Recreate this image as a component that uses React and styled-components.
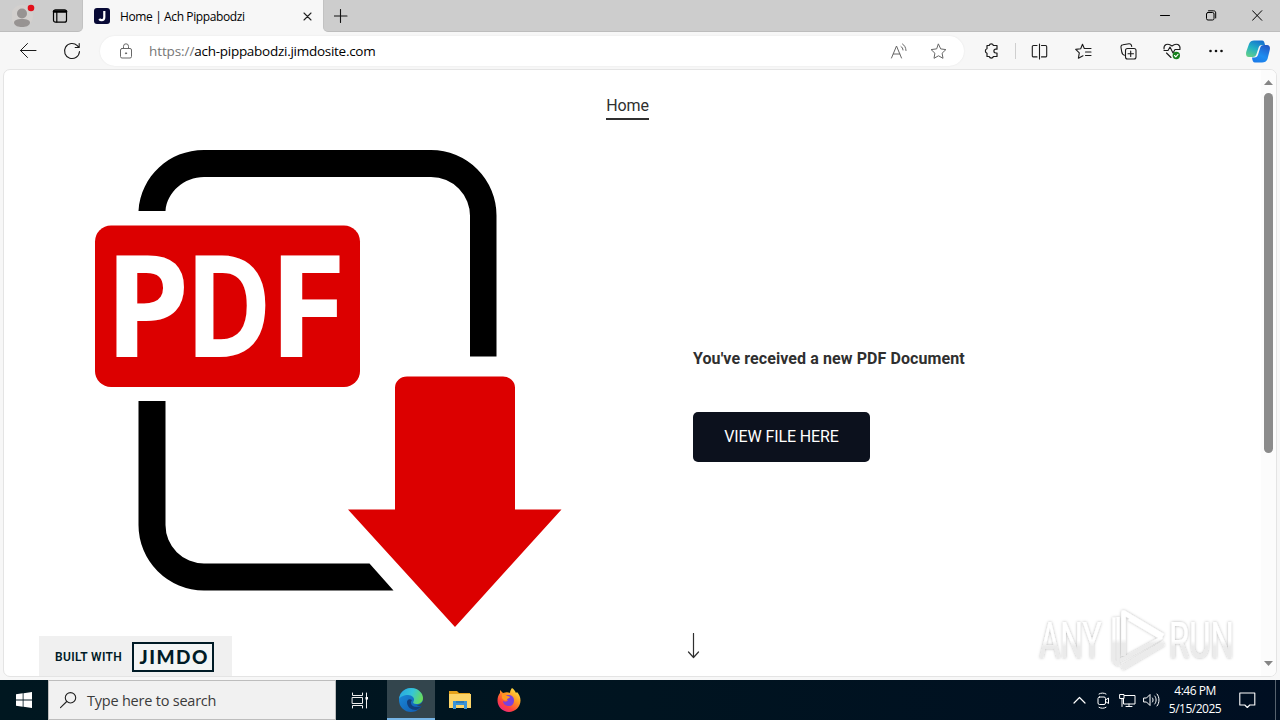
import styled, { createGlobalStyle } from 'styled-components';

const GlobalStyle = createGlobalStyle`
    * {
        box-sizing: border-box;
    }

    body {
        margin: 0;
        overflow: hidden;
    }
`

const Screen = styled.div`
    display: flex;
    flex-direction: column;
    width: 1280px;
    height: 720px;
    overflow: hidden;
    background: #f7f7f7;
    font-family: 'Open Sans', 'Noto Sans', sans-serif;
    color: #000;

    svg {
        display: block;
        flex: none;
    }
`

/* ---------- title bar ---------- */

const TitleBar = styled.div`
    display: flex;
    height: 32px;
    flex: none;
    background: #f7f7f7;
`

const ProfileArea = styled.div`
    display: flex;
    align-items: center;
    gap: 16px;
    width: 83px;
    padding-left: 12px;
    background: #cdcdcd;
    border-bottom: 1px solid #bdbdbd;
    border-right: 1px solid #c2c2c2;
    border-radius: 0 0 5px 0;
`

const Tab = styled.div`
    display: flex;
    align-items: center;
    width: 240px;
    padding: 0 10px 0 11px;
    font-size: 12px;
`

const TabTitle = styled.span`
    flex: 1;
    margin-left: 10px;
    letter-spacing: -0.38px;
    white-space: nowrap;
`

const TitleRest = styled.div`
    display: flex;
    flex: 1;
    align-items: center;
    justify-content: space-between;
    padding-left: 10px;
    background: #cdcdcd;
    border-bottom: 1px solid #bdbdbd;
    border-left: 1px solid #c2c2c2;
    border-radius: 0 0 0 5px;
`

const WindowButtons = styled.div`
    display: flex;
`

const Slot = styled.div`
    display: flex;
    align-items: center;
    justify-content: center;
    flex: none;
    width: ${props => props.$w || 44}px;
`

/* ---------- toolbar ---------- */

const Toolbar = styled.div`
    display: flex;
    align-items: center;
    height: 37px;
    flex: none;
    padding: 1px 0 0 6px;
`

const AddressBar = styled.div`
    display: flex;
    align-items: center;
    width: 864px;
    height: 30px;
    margin-left: 6px;
    margin-right: 5px;
    padding-left: 20px;
    background: white;
    border-radius: 15px;
    box-shadow: 0 0 2px rgba(0, 0, 0, 0.08);
    font-size: 13.5px;
`

const Url = styled.span`
    flex: 1;
    margin-left: 17px;
    letter-spacing: -0.27px;
    white-space: nowrap;
`

const Scheme = styled.span`
    color: #767676;
    letter-spacing: -0.1px;
`

const Divider = styled.div`
    width: 1px;
    height: 16px;
    margin: 0 1px 0 2px;
    background: #cfcfcf;
`

/* ---------- page ---------- */

const Frame = styled.div`
    position: relative;
    display: flex;
    height: 608px;
    flex: none;
    margin: 0 3px 3px;
    background: white;
    border: 1px solid #e4e4e4;
    border-radius: 7px;
    overflow: hidden;
    font-family: Roboto, sans-serif;
    color: #2f2f2f;
`

const Page = styled.main`
    display: flex;
    flex-direction: column;
    flex: 1;
`

const Nav = styled.nav`
    display: flex;
    justify-content: center;
    height: 60px;
    padding: 26px 10px 0 0;
`

const NavLink = styled.a`
    height: 24px;
    border-bottom: 2px solid #2f2f2f;
    font-size: 16px;
    line-height: 20px;
    letter-spacing: -0.1px;
`

const Hero = styled.section`
    display: flex;
    flex: 1;
    padding-left: 76px;
`

const Message = styled.div`
    display: flex;
    flex-direction: column;
    align-items: flex-start;
    margin-left: 93px;
    padding-top: 217px;
`

const Heading = styled.h1`
    margin: 0;
    font-size: 16px;
    font-weight: 700;
    line-height: 24px;
    letter-spacing: 0.09px;
    white-space: nowrap;
`

const ViewButton = styled.button`
    width: 177px;
    height: 50px;
    margin-top: 41px;
    padding: 0 0 2px;
    border: none;
    border-radius: 5px;
    background: #0c111d;
    color: white;
    font-family: Roboto, sans-serif;
    font-size: 16px;
    letter-spacing: -0.1px;
`

const ScrollHint = styled.div`
    margin: 171px 0 0 -6px;
`

const ScrollTrack = styled.div`
    display: flex;
    flex-direction: column;
    align-items: center;
    width: 15px;
    padding-top: 10px;
    background: #fcfcfc;
`

const ScrollThumb = styled.div`
    width: 9px;
    height: 360px;
    margin: 8px 0 208px;
    border-radius: 5px;
    background: #8b8b8b;
`

const BuiltWith = styled.div`
    position: absolute;
    left: 35px;
    bottom: 0;
    display: flex;
    align-items: center;
    gap: 10px;
    width: 193px;
    height: 40px;
    padding: 1px 0 0 16px;
    background: #f0f0f0;
    color: #001b26;
    font-size: 12px;
    white-space: nowrap;
`

const BuiltLabel = styled.span`
    width: 67px;
    font-weight: 600;
    letter-spacing: 0.33px;
`

const Watermark = styled.div`
    position: absolute;
    right: 28px;
    bottom: 0;
`

/* ---------- taskbar ---------- */

const Taskbar = styled.div`
    display: flex;
    align-items: stretch;
    height: 40px;
    flex: none;
    background: linear-gradient(90deg, #001720, #001420 50%, #000f22);
    color: white;
`

const SearchBox = styled.div`
    display: flex;
    align-items: center;
    gap: 10px;
    width: 288px;
    padding-left: 11px;
    background: #f1f1f1;
    border: 1px solid #bdbdbd;
    color: #3b3b3b;
    font-size: 14.5px;
    letter-spacing: -0.22px;
`

const TaskButton = styled(Slot)`
    background: ${props => (props.$active ? '#33454d' : 'none')};
    border-bottom: 2px solid ${props => (props.$active ? '#76b5e6' : 'transparent')};
    padding-top: 2px;
`

const Spacer = styled.div`
    flex: 1;
`

const Clock = styled.div`
    width: 64px;
    padding-top: 2px;
    font-size: 12px;
    line-height: 18px;
    letter-spacing: -0.5px;
    text-align: center;
    white-space: nowrap;
`

const ShowDesktop = styled.div`
    width: 5px;
    border-left: 1px solid #56626e;
`

/* ---------- icons ---------- */

function Icon({ w = 16, h = w, color = '#1b1b1b', sw = 1, children }) {
    return (
        <svg width={w} height={h} viewBox={`0 0 ${w} ${h}`} fill="none" stroke={color}
            strokeWidth={sw} strokeLinecap="round" strokeLinejoin="round">
            {children}
        </svg>
    );
}

function ProfileIcon() {
    return (
        <svg width="24" height="24" viewBox="0 0 24 24">
            <circle cx="10" cy="12" r="11" fill="#d3d0ce" />
            <circle cx="10" cy="9.500" r="5" fill="#979392" />
            <path d="M2 19c0-3 3-4 8-4s8 1 8 4c-1 3-4 4-8 4s-7-1-8-4z" fill="#979392" />
            <circle cx="19" cy="4" r="3.300" fill="#e3101b" />
        </svg>
    );
}

function CopilotIcon() {
    return (
        <svg width="24" height="23" viewBox="0 0 24 23">
            <defs>
                <linearGradient id="copA" x1="0.700" y1="0" x2="0.200" y2="1">
                    <stop offset="0" stopColor="#1672cf" />
                    <stop offset="0.500" stopColor="#22b0c4" />
                    <stop offset="1" stopColor="#62cf8a" />
                </linearGradient>
                <linearGradient id="copB" x1="0.800" y1="0" x2="0.300" y2="1">
                    <stop offset="0" stopColor="#2358c5" />
                    <stop offset="0.600" stopColor="#1d8df0" />
                    <stop offset="1" stopColor="#1b7be9" />
                </linearGradient>
            </defs>
            <path d="M8 .5h8c2 0 2.500 2 3 4.500h-3c-2 0-3 1-3.500 3l-2 6c-.6 2-1.500 3-4 3H3c-3 0-3.500-3-2.500-6l2.500-7C3.800 1.500 6 .5 8 .5z" fill="url(#copA)" />
            <path d="M16 22.500H9c-2 0-2.500-1.500-3-5h2.500c2 0 3-1 3.600-3l2-6.500c.6-2 1.400-3 3.900-3H21c3 0 3.500 3 2.500 6l-2 8c-.8 2.500-3 3.500-5.500 3.500z" fill="url(#copB)" />
        </svg>
    );
}

function PdfPicture() {
    return (
        <svg width="520" height="510" viewBox="80 130 520 510">
            <path d="M138.500 211C141 176 169 150 204 150H431A65.500 65.500 0 0 1 496.500 215.500V356.500H470V217A39 39 0 0 0 431 177H204C184 177 167 192 165.500 211Z" fill="#000" />
            <path d="M138.500 401H165.500V525A38.500 38.500 0 0 0 204 563.500H369.500L393.500 590.500H204A65.500 65.500 0 0 1 138.500 525Z" fill="#000" />
            <rect x="95" y="225.500" width="265" height="161.500" rx="16" fill="#dc0000" />
            <path d="M407 376.500H503A12 11 0 0 1 515 387.500V509.500H561.500L455 627L348 509.500H395V387.500A12 11 0 0 1 407 376.500Z" fill="#dc0000" />
            <g fill="#fff" fontFamily="Open Sans" fontWeight="700" fontSize="141">
                <text transform="translate(104.300 356.500) scale(0.970 1)">P</text>
                <text transform="translate(185 356.500) scale(0.835 1)">D</text>
                <text transform="translate(268 356.500) scale(1.015 1)">F</text>
            </g>
        </svg>
    );
}

function JimdoLogo() {
    return (
        <svg width="82" height="30" viewBox="0 0 82 30">
            <rect x="1" y="1" width="80" height="28" fill="#f3f5f5" stroke="#001b26" strokeWidth="2" />
            <text x="7.500" y="21.700" fontFamily="Lato" fontWeight="900" fontSize="19" fill="#001b26"
                textLength="68">JIMDO</text>
        </svg>
    );
}

function AnyRun() {
    return (
        <svg width="214" height="72" viewBox="1033 604 214 72">
            <defs>
                <linearGradient id="wm" gradientUnits="userSpaceOnUse" x1="0" y1="610" x2="0" y2="670">
                    <stop offset="0.480" stopColor="#fff" />
                    <stop offset="0.560" stopColor="#ebebeb" />
                </linearGradient>
                <linearGradient id="wmText" x1="0" y1="0" x2="0" y2="1">
                    <stop offset="0.500" stopColor="#fff" />
                    <stop offset="0.600" stopColor="#ebebeb" />
                </linearGradient>
                <filter id="glow" x="-5%" y="-10%" width="110%" height="120%">
                    <feDropShadow dx="0" dy="0" stdDeviation="1.800" floodColor="#000" floodOpacity="0.300" />
                </filter>
            </defs>
            <g filter="url(#glow)">
                <g fill="url(#wmText)" fontFamily="Roboto" fontWeight="400" fontSize="50">
                    <text transform="translate(1038.500 658) scale(0.635 1)">ANY</text>
                    <text transform="translate(1168 658) scale(0.657 1)">RUN</text>
                </g>
                <g fill="none" stroke="url(#wm)" strokeWidth="4.500" strokeLinejoin="round">
                    <path d="M1122.500 656V612.500L1162 636" />
                    <path d="M1113 617.500V661L1117 664.500V617" strokeWidth="3" />
                    <path d="M1121 668L1162.500 643.500" />
                    <path d="M1119 660.500L1160 638L1128 619" strokeWidth="3" />
                </g>
            </g>
        </svg>
    );
}

function EdgeLogo() {
    return (
        <svg width="24" height="24" viewBox="0 0 24 24">
            <defs>
                <linearGradient id="edgeTop" x1="0" y1="0.300" x2="1" y2="0.600">
                    <stop offset="0" stopColor="#28a8e0" />
                    <stop offset="0.500" stopColor="#35c5d8" />
                    <stop offset="1" stopColor="#6adc55" />
                </linearGradient>
                <linearGradient id="edgeLow" x1="0" y1="0" x2="1" y2="1">
                    <stop offset="0" stopColor="#1b8fdd" />
                    <stop offset="1" stopColor="#1057ae" />
                </linearGradient>
            </defs>
            <circle cx="12" cy="12" r="12" fill="url(#edgeLow)" />
            <path d="M24 11c0 4-3 6-6.500 6 2 1.500 4 1.200 5.800.5L26 14z" fill="#33454d" />
            <path d="M0 11C1 4 6 0 12 0c7 0 12 5 12 10 0 4-3 6-6.500 6-3 0-4-1-3-2.500C16.500 10 13 7 9 7 5 7 1 9 0 11z" fill="url(#edgeTop)" />
            <path d="M8 14c0 5 4 8 9 8 2-.4 4-2 5.500-4-5 2-10 1-10.500-3-.2-2 .6-2 1-3-3-2-5 0-5 2z" fill="#123f7c" />
        </svg>
    );
}

function ExplorerLogo() {
    return (
        <svg width="22" height="20" viewBox="0 0 22 20">
            <path d="M0 1h8l2 2h11v4H0z" fill="#e5a21b" />
            <path d="M0 4h22v14H0z" fill="#fcd468" />
            <path d="M4 11h14v8h-3v-4H7v4H4z" fill="#3a93d6" />
            <path d="M7 11h8v2H7z" fill="#2b7ab9" />
        </svg>
    );
}

function FirefoxLogo() {
    return (
        <svg width="24" height="24" viewBox="0 0 24 24">
            <defs>
                <linearGradient id="fox" x1="0.900" y1="0" x2="0.200" y2="1">
                    <stop offset="0" stopColor="#fff04a" />
                    <stop offset="0.400" stopColor="#ff9a22" />
                    <stop offset="0.750" stopColor="#ff4040" />
                    <stop offset="1" stopColor="#e7258a" />
                </linearGradient>
            </defs>
            <path d="M15 0c2 1 3 3 4 5l1-1c2 2 3.500 5 3.500 8.500C23.500 19 18 24 12 24S.5 19 .5 12.500C.5 9 1.500 7 3 5V2l3 3c3-1 5-1 7 0 0-2 1-4 2-5z" fill="url(#fox)" />
            <path d="M11 7c4 0 6 2 6 5.500S15 18 12 18s-6-2-6-5c2 1 4 1 5-1-2 0-3-1-4-2 1-2 2-3 4-3z" fill="#7a41dd" />
            <path d="M5 6c2 0 4 1 5 2 1 0 2 0 3 1-1 2-3 1-3 3-2 1-4 0-5-2z" fill="#ff9a22" />
        </svg>
    );
}

function Browser() {
    return (
        <>
            <TitleBar>
                <ProfileArea>
                    <ProfileIcon />
                    <Icon w={16} h={14} color="#000" sw={1.2}>
                        <rect x="1.500" y=".8" width="13" height="12.400" rx="2" />
                        <path d="M2 2.500h12" strokeWidth="2.500" />
                        <path d="M4.800 3v10" />
                    </Icon>
                </ProfileArea>
                <Tab>
                    <svg width="16" height="16" viewBox="0 0 16 16">
                        <rect width="16" height="16" rx="3" fill="#080a36" />
                        <path d="M10.300 3v6.200c0 2-1 3-2.600 3-1.100 0-1.900-.4-2.500-1.200" fill="none" stroke="#fff" strokeWidth="2.200" />
                    </svg>
                    <TabTitle>Home | Ach Pippabodzi</TabTitle>
                    <Icon w={11} color="#222" sw={1.1}><path d="M2 2l7 7M9 2l-7 7" /></Icon>
                </Tab>
                <TitleRest>
                    <Icon w={14} color="#111" sw={1.1}><path d="M6.500 .5v13M0 7h13" /></Icon>
                    <WindowButtons>
                        <Slot $w={46}><Icon w={11} color="#000"><path d="M.5 5.500h9" /></Icon></Slot>
                        <Slot $w={46}>
                            <Icon w={11} color="#000">
                                <rect x=".5" y="2.500" width="7.500" height="7.500" rx="1.500" />
                                <path d="M2.500 .8h5c1.500 0 2.200.8 2.200 2.200v5" />
                            </Icon>
                        </Slot>
                        <Slot $w={46}><Icon w={11} color="#000"><path d="M.5.7l9.300 9.600M9.800.7L.5 10.300" /></Icon></Slot>
                    </WindowButtons>
                </TitleRest>
            </TitleBar>
            <Toolbar>
                <Slot><Icon w={18}><path d="M1.500 8.500h15.500M8.500 1.500L1.500 8.500l7 7" /></Icon></Slot>
                <Slot><Icon w={18} sw={1.1}><path d="M16.500 9.500a7.500 7.500 0 1 1-2.200-5.800L16 5.500M16.200 1.500v4h-4" /></Icon></Slot>
                <AddressBar>
                    <Icon w={12} h={16} color="#686868">
                        <rect x=".5" y="5.500" width="11" height="9.500" rx="1.500" />
                        <path d="M3.500 5.500V3.300a2.500 2.500 0 0 1 5 0v2.200" />
                        <circle cx="6" cy="10.300" r=".6" fill="#686868" />
                    </Icon>
                    <Url><Scheme>https://</Scheme>ach-pippabodzi.jimdosite.com</Url>
                    <Slot $w={40}>
                        <Icon w={17} color="#666">
                            <path d="M1.500 15L6.500 3l5 12M3.300 11h6.500" />
                            <path d="M11 3.500c1.200.8 1.800 1.800 2 3.500M12.500 1c2.200 1.500 3.300 3.500 3.500 6.500" />
                        </Icon>
                    </Slot>
                    <Slot $w={40}>
                        <Icon w={17} color="#666">
                            <path d="M8.500 1.200l2.200 4.700 5.200.7-3.800 3.600.9 5.100-4.500-2.500L4 15.300l.9-5.100L1.100 6.600l5.200-.7z" />
                        </Icon>
                    </Slot>
                    <Slot $w={6} />
                </AddressBar>
                <Slot>
                    <Icon w={16} sw={1.2}>
                        <path d="M4 2.500h2.200a2.200 2.200 0 0 1 4.200 0H14v3.700h-1.200a1.900 1.900 0 0 0 0 3.800H14v3.500h-3.600a2.200 2.200 0 0 1-4.200 0H4V10.200a2.300 2.300 0 0 1 0-4.400z" />
                    </Icon>
                </Slot>
                <Divider />
                <Slot>
                    <Icon w={17} sw={1.1}>
                        <path d="M6 2.500H2.500a1.200 1.200 0 0 0-1.200 1.200v9a1.200 1.200 0 0 0 1.200 1.200H6M10.500 2.500h4a1.200 1.200 0 0 1 1.200 1.200v9a1.200 1.200 0 0 1-1.200 1.200h-4M8.500 1v15" />
                    </Icon>
                </Slot>
                <Slot $w={45}>
                    <Icon w={17} sw={1.1}>
                        <path d="M9.300 5.500L7.500 1.300 5.700 5.800l-5 .6 3.600 3.500-.9 5.300L8 12.800M9.300 5.500h6.700M10.500 9H16M10.500 12.500H16" />
                    </Icon>
                </Slot>
                <Slot>
                    <Icon w={17} sw={1.1}>
                        <path d="M4.500 12.200C2.500 12 2 10.500 1.700 8.700L1 4.500C.8 3 1.500 2 3 1.800l6-1c1.500-.2 2.500.7 2.700 2.700" />
                        <rect x="5.500" y="5.500" width="10.500" height="10.500" rx="2" />
                        <path d="M10.700 8v5.500M8 10.700h5.500" />
                    </Icon>
                </Slot>
                <Slot>
                    <Icon w={18} sw={1.1}>
                        <path d="M1 7C.5 3 4.500.3 9 4c4.500-3.700 8.500-1 8 3M1 8.500h4L7 5l3 6 2-3.500h5M3.500 11L8 15.500" />
                        <circle cx="13.300" cy="13.500" r="3.700" fill="#16801c" stroke="none" />
                        <path d="M11.500 13.500l1.300 1.300 2.200-2.500" stroke="#fff" />
                    </Icon>
                </Slot>
                <Slot>
                    <Icon w={16}>
                        <g fill="#111" stroke="none">
                            <circle cx="2.500" cy="8" r="1.300" />
                            <circle cx="8" cy="8" r="1.300" />
                            <circle cx="13.500" cy="8" r="1.300" />
                        </g>
                    </Icon>
                </Slot>
                <Slot $w={40}><CopilotIcon /></Slot>
            </Toolbar>
        </>
    );
}

function Site() {
    return (
        <Frame>
            <Page>
                <Nav><NavLink>Home</NavLink></Nav>
                <Hero>
                    <PdfPicture />
                    <Message>
                        <Heading>You've received a new PDF Document</Heading>
                        <ViewButton>VIEW FILE HERE</ViewButton>
                        <ScrollHint>
                            <Icon w={13} h={26} color="#2f2f2f" sw={1.2}><path d="M6.500 .5v24M1.500 19l5 5.500 5-5.500" /></Icon>
                        </ScrollHint>
                    </Message>
                </Hero>
            </Page>
            <ScrollTrack>
                <svg width="9" height="5"><path d="M0 5L4.500 0L9 5Z" fill="#858585" /></svg>
                <ScrollThumb />
                <svg width="9" height="5"><path d="M0 0L4.500 5L9 0Z" fill="#858585" /></svg>
            </ScrollTrack>
            <BuiltWith>
                <BuiltLabel>BUILT WITH</BuiltLabel>
                <JimdoLogo />
            </BuiltWith>
            <Watermark><AnyRun /></Watermark>
        </Frame>
    );
}

function WindowsTaskbar() {
    return (
        <Taskbar>
            <Slot $w={48}>
                <svg width="16" height="16" viewBox="0 0 16 16" fill="#fff">
                    <path d="M0 2.300L6.700 1.300V7.600H0zM7.500 1.200L16 0V7.600H7.500zM0 8.400H6.700V14.700L0 13.700zM7.500 8.400H16V16L7.500 14.800z" />
                </svg>
            </Slot>
            <SearchBox>
                <Icon w={17} color="#222" sw={1.1}><circle cx="10.500" cy="5.800" r="5.200" /><path d="M6.700 9.500L.5 15.700" /></Icon>
                Type here to search
            </SearchBox>
            <Slot $w={48}>
                <Icon w={18} h={17} color="#eee">
                    <path d="M1.500 1v2.500h10V1M1.500 16v-2.500h10V16M15.500 1v15" />
                    <rect x="1.500" y="5.500" width="10" height="6" />
                    <rect x="14.500" y="5" width="2.500" height="2.500" fill="#fff" stroke="none" />
                </Icon>
            </Slot>
            <Slot $w={3} />
            <TaskButton $w={48} $active><EdgeLogo /></TaskButton>
            <TaskButton $w={49}><ExplorerLogo /></TaskButton>
            <TaskButton $w={49}><FirefoxLogo /></TaskButton>
            <Spacer />
            <Slot $w={24}><Icon w={13} h={8} color="#fff" sw={1.2}><path d="M1 7l5.500-5.500L12 7" /></Icon></Slot>
            <Slot $w={24}>
                <Icon w={14} h={17} color="#fff">
                    <rect x="2" y="5" width="7.500" height="7.500" rx="1.500" />
                    <path d="M9.500 8l3-2v5.500l-3-2M3 2c2-1.300 5-1.300 7 0M3 15.300c2 1.300 5 1.300 7 0" />
                </Icon>
            </Slot>
            <Slot $w={24}>
                <Icon w={17} h={15} color="#fff">
                    <path d="M5.500 2.500h10.500v8.500H4.500V6M1 1.500h4v4H1zM3 5.500v8M7 13.500h6M10 11v2.500" />
                </Icon>
            </Slot>
            <Slot $w={24}>
                <Icon w={17} h={14} color="#fff">
                    <path d="M1 5h2.500L7 1.500v11L3.500 9H1zM9.500 5c.8 1 .8 3 0 4M11.800 3c1.800 2 1.800 6 0 8M14 1c2.700 3 2.700 9 0 12" />
                </Icon>
            </Slot>
            <Clock>4:46 PM<br />5/15/2025</Clock>
            <Slot $w={40}>
                <Icon w={17} h={17} color="#fff" sw={1.1}><path d="M.8 1h15v12h-5L8.300 15.500 5.800 13h-5z" /></Icon>
            </Slot>
            <Slot $w={8} />
            <ShowDesktop />
        </Taskbar>
    );
}

function App() {
    return (
        <Screen>
            <GlobalStyle />
            <Browser />
            <Site />
            <WindowsTaskbar />
        </Screen>
    );
}

export default App;
